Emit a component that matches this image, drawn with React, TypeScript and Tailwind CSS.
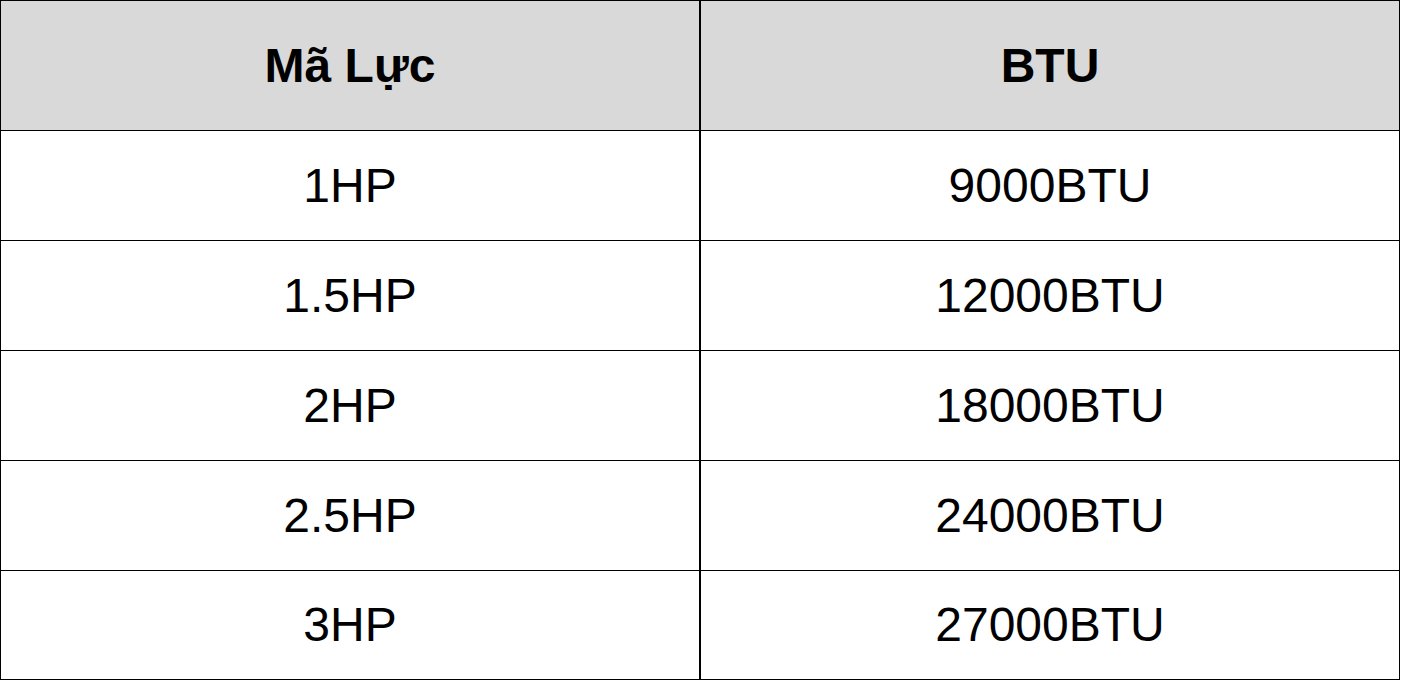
const ROWS: [string, string][] = [
  ['1HP', '9000BTU'],
  ['1.5HP', '12000BTU'],
  ['2HP', '18000BTU'],
  ['2.5HP', '24000BTU'],
  ['3HP', '27000BTU'],
];

export default function App() {
  return (
    <div className="w-[1401px] h-[681px] bg-white font-['Liberation_Sans',Arial,sans-serif] text-black">
      <div className="w-[1400px] border-l border-t border-black">
        {/* Header */}
        <div className="flex h-[130px] bg-[#d9d9d9] border-b border-black">
          <div className="w-[700px] flex items-center justify-center border-r-2 border-black text-[48px] font-bold">
            Mã Lực
          </div>
          <div className="w-[699px] flex items-center justify-center border-r border-black text-[48px] font-bold">
            BTU
          </div>
        </div>

        {/* Rows */}
        {ROWS.map(([hp, btu], i) => (
          <div
            key={hp}
            className={`flex border-b border-black ${i === ROWS.length - 1 ? 'h-[109px]' : 'h-[110px]'}`}
          >
            <div className="w-[700px] flex items-center justify-center border-r-2 border-black text-[48px]">
              {hp}
            </div>
            <div className="w-[699px] flex items-center justify-center border-r border-black text-[48px]">
              {btu}
            </div>
          </div>
        ))}
      </div>
    </div>
  );
}
